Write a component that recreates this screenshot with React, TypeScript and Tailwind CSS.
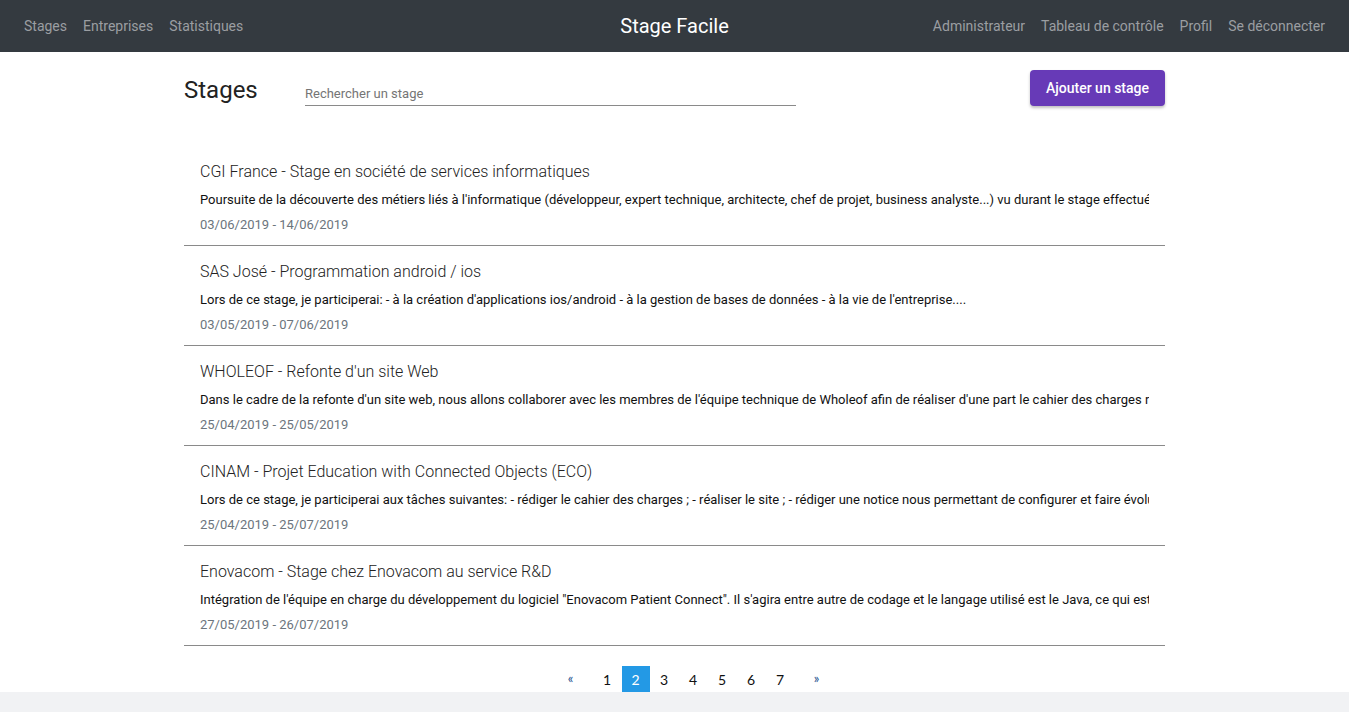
import React from "react";

interface Stage {
  title: string;
  description: string;
  dates: string;
}

const stages: Stage[] = [
  {
    title: "CGI France - Stage en société de services informatiques",
    description:
      "Poursuite de la découverte des métiers liés à l'informatique (développeur, expert technique, architecte, chef de projet, business analyste...) vu durant le stage effectué en première année et approfondissement des compétences techniques.",
    dates: "03/06/2019 - 14/06/2019",
  },
  {
    title: "SAS José - Programmation android / ios",
    description:
      "Lors de ce stage, je participerai: - à la création d'applications ios/android - à la gestion de bases de données - à la vie de l'entreprise....",
    dates: "03/05/2019 - 07/06/2019",
  },
  {
    title: "WHOLEOF - Refonte d'un site Web",
    description:
      "Dans le cadre de la refonte d'un site web, nous allons collaborer avec les membres de l'équipe technique de Wholeof afin de réaliser d'une part le cahier des charges relatif au projet.",
    dates: "25/04/2019 - 25/05/2019",
  },
  {
    title: "CINAM - Projet Education with Connected Objects (ECO)",
    description:
      "Lors de ce stage, je participerai aux tâches suivantes: - rédiger le cahier des charges ; - réaliser le site ; - rédiger une notice nous permettant de configurer et faire évoluer le site.",
    dates: "25/04/2019 - 25/07/2019",
  },
  {
    title: "Enovacom - Stage chez Enovacom au service R&D",
    description:
      "Intégration de l'équipe en charge du développement du logiciel \"Enovacom Patient Connect\". Il s'agira entre autre de codage et le langage utilisé est le Java, ce qui est une bonne chose.",
    dates: "27/05/2019 - 26/07/2019",
  },
];

function NavBar() {
  return (
    <nav className="h-[52px] bg-[#343a40] flex items-center justify-between px-6 relative">
      <div className="flex items-center gap-4 text-[14px] text-[#9b9ea2]">
        <a>Stages</a>
        <a>Entreprises</a>
        <a>Statistiques</a>
      </div>
      <div className="absolute left-1/2 -translate-x-1/2 text-[20px] text-white">
        Stage Facile
      </div>
      <div className="flex items-center gap-4 text-[14px] text-[#9b9ea2]">
        <a>Administrateur</a>
        <a>Tableau de contrôle</a>
        <a>Profil</a>
        <a>Se déconnecter</a>
      </div>
    </nav>
  );
}

function StageItem({ stage }: { stage: Stage }) {
  return (
    <div className="h-[100px] border-b border-[#8a8a8a] px-4 pt-[14px]">
      <div className="text-[16px] leading-[24px] font-light text-[#222]">{stage.title}</div>
      <div className="mt-[6px] text-[13px] leading-[20px] text-[#111] whitespace-nowrap overflow-hidden">
        {stage.description}
      </div>
      <div className="mt-[5px] text-[13px] leading-[20px] text-[#6c757d]">{stage.dates}</div>
    </div>
  );
}

function Pagination() {
  const pages = [1, 2, 3, 4, 5, 6, 7];
  return (
    <div className="flex justify-center items-center h-[26px] mt-[20px] pl-[40px] font-['Lato',sans-serif] text-[14px]">
      <span className="w-[36px] text-[#1d4f8c] text-[13px] text-center pr-1">«</span>
      <div className="w-[2px]" />
      {pages.map((p) => (
        <span
          key={p}
          className={
            p === 2
              ? "w-[28px] h-[26px] flex items-center justify-center bg-[#2399e5] text-white"
              : "w-[29px] h-[26px] flex items-center justify-center text-[#111]"
          }
        >
          {p}
        </span>
      ))}
      <span className="ml-[4px] w-[36px] text-[#1d4f8c] text-[13px] text-center">»</span>
    </div>
  );
}

export default function App() {
  return (
    <div className="min-h-[712px] bg-[#f1f2f4] font-['Roboto',sans-serif]">
      <div className="bg-white h-[692px] overflow-hidden">
        <NavBar />
        <main className="w-[981px] mx-auto">
          <div className="flex items-start pt-[18px]">
            <h1 className="text-[24px] leading-[36px] text-[#222] mt-[2px] w-[121px]">Stages</h1>
            <div className="w-[491px] mt-[14px] border-b border-[#8a8a8a] h-[22px] text-[13px] text-[#757575] leading-[20px]">
              Rechercher un stage
            </div>
            <div className="flex-1" />
            <button className="h-[36px] w-[135px] rounded bg-[#673ab7] text-white text-[14px] font-medium shadow-[0_2px_3px_rgba(0,0,0,0.25)]">
              Ajouter un stage
            </button>
          </div>
          <div className="mt-[38px]">
            {stages.map((s) => (
              <StageItem key={s.title} stage={s} />
            ))}
          </div>
          <Pagination />
        </main>
      </div>
    </div>
  );
}
